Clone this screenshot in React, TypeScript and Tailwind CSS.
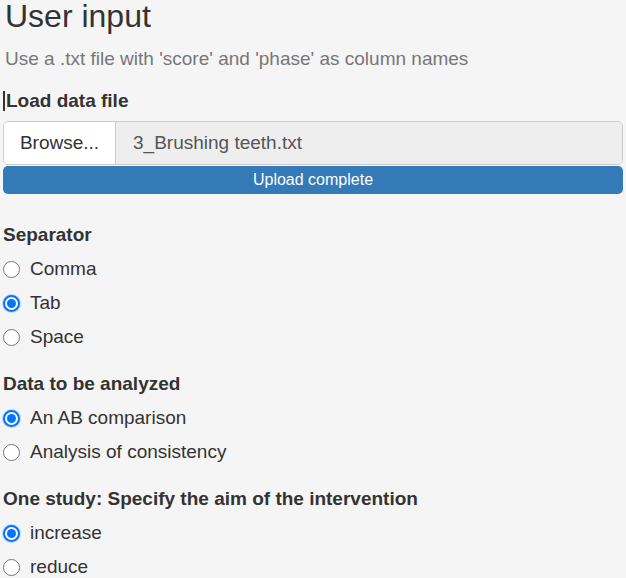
import { useState } from "react";

type Option = { value: string; label: string };

function Radio({ checked }: { checked: boolean }) {
    return checked ? (
        <span className="flex h-[17px] w-[17px] shrink-0 items-center justify-center rounded-full border-2 border-[#0075ff] bg-white shadow-[0_0_0_1px_#b9d6ff]">
            <span className="h-[9px] w-[9px] rounded-full bg-[#0075ff]" />
        </span>
    ) : (
        <span className="h-[17px] w-[17px] shrink-0 rounded-full border border-[#767676] bg-white" />
    );
}

function RadioGroup({
    title,
    options,
    value,
    onChange,
}: {
    title: string;
    options: Option[];
    value: string;
    onChange: (v: string) => void;
}) {
    return (
        <div className="mb-[18px]">
            <div className="mb-[5px] h-[24px] text-[19px] font-bold leading-[24px]">{title}</div>
            {options.map((o) => (
                <label
                    key={o.value}
                    className="flex h-[34px] cursor-pointer items-center gap-[10px]"
                    onClick={() => onChange(o.value)}
                >
                    <Radio checked={value === o.value} />
                    <span className="text-[19px]">{o.label}</span>
                </label>
            ))}
        </div>
    );
}

export default function App() {
    const [sep, setSep] = useState("tab");
    const [data, setData] = useState("ab");
    const [aim, setAim] = useState("increase");

    return (
        <div
            className="min-h-screen overflow-hidden bg-[#f5f5f5] text-[#333]"
            style={{ fontFamily: '"Liberation Sans", Arial, sans-serif' }}
        >
            <div className="px-[3px]">
                <h3 className="pl-[2px] text-[32px] leading-[32px]">User input</h3>
                <p className="mt-[15px] pl-[2px] text-[19px] leading-[24px] text-[#777]">
                    Use a .txt file with 'score' and 'phase' as column names
                </p>

                <div className="mt-[18px] flex h-[24px] items-center text-[19px] font-bold">
                    <span className="mr-[1px] h-[20px] w-[2px] bg-[#333]" />
                    Load data file
                </div>

                <div className="mt-[8px] flex h-[44px] overflow-hidden rounded-[5px] border border-[#ccc]">
                    <div className="flex w-[112px] items-center justify-center border-r border-[#ccc] bg-white text-[19px]">
                        Browse...
                    </div>
                    <div className="flex flex-1 items-center bg-[#eee] pl-[17px] text-[19px] text-[#555]">
                        3_Brushing teeth.txt
                    </div>
                </div>
                <div className="mt-[1px] flex h-[28px] items-center justify-center rounded-[5px] bg-[#337ab7] text-[16px] text-white">
                    Upload complete
                </div>

                <div className="mt-[29px]">
                    <RadioGroup
                        title="Separator"
                        value={sep}
                        onChange={setSep}
                        options={[
                            { value: "comma", label: "Comma" },
                            { value: "tab", label: "Tab" },
                            { value: "space", label: "Space" },
                        ]}
                    />
                    <RadioGroup
                        title="Data to be analyzed"
                        value={data}
                        onChange={setData}
                        options={[
                            { value: "ab", label: "An AB comparison" },
                            { value: "consistency", label: "Analysis of consistency" },
                        ]}
                    />
                    <RadioGroup
                        title="One study: Specify the aim of the intervention"
                        value={aim}
                        onChange={setAim}
                        options={[
                            { value: "increase", label: "increase" },
                            { value: "reduce", label: "reduce" },
                        ]}
                    />
                </div>
            </div>
        </div>
    );
}
